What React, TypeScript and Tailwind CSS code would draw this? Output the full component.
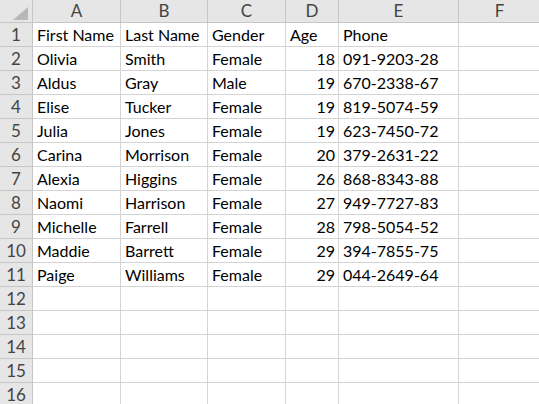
const cols = ["A", "B", "C", "D", "E", "F"];

const rows: (string | number)[][] = [
  ["First Name", "Last Name", "Gender", "Age", "Phone"],
  ["Olivia", "Smith", "Female", 18, "091-9203-28"],
  ["Aldus", "Gray", "Male", 19, "670-2338-67"],
  ["Elise", "Tucker", "Female", 19, "819-5074-59"],
  ["Julia", "Jones", "Female", 19, "623-7450-72"],
  ["Carina", "Morrison", "Female", 20, "379-2631-22"],
  ["Alexia", "Higgins", "Female", 26, "868-8343-88"],
  ["Naomi", "Harrison", "Female", 27, "949-7727-83"],
  ["Michelle", "Farrell", "Female", 28, "798-5054-52"],
  ["Maddie", "Barrett", "Female", 29, "394-7855-75"],
  ["Paige", "Williams", "Female", 29, "044-2649-64"],
  [], [], [], [], [],
];

// F runs just past the window edge, so its right gridline is off screen
const grid = "grid grid-cols-[33px_88px_87px_78px_53px_120px_82px]";

export default function App() {
  return (
    <div className="w-[539px] h-[404px] overflow-hidden bg-white font-['Lato','Liberation_Sans',sans-serif] text-[16px] leading-[20px] text-black">
      {/* column headers */}
      <div className={`${grid} grid-rows-[23px] h-[23px] bg-[#e6e6e6]`}>
        <div className="relative border-r border-b border-[#c6c6c6]">
          <svg className="absolute left-[13px] top-[7px]" width="15" height="13" viewBox="0 0 15 13">
            <polygon points="15,0 15,13 0,13" fill="#b8b8b8" />
          </svg>
        </div>
        {cols.map((c) => (
          <div key={c} className="flex items-center justify-center border-r border-b border-[#c6c6c6] text-[17px] text-[#444]">
            {c}
          </div>
        ))}
      </div>

      {rows.map((r, i) => (
        <div key={i} className={`${grid} grid-rows-[24px] h-[24px]`}>
          <div className="flex items-center justify-center bg-[#e6e6e6] border-r border-b border-[#c6c6c6] text-[17px] text-[#444]">
            {i + 1}
          </div>
          {cols.map((c, j) => {
            const v = r[j];
            return (
              <div
                key={c}
                className={`flex items-end pb-[1px] border-r border-b border-[#d4d4d4] whitespace-nowrap ${
                  typeof v === "number" ? "justify-end pr-[3px]" : "pl-[4px]"
                }`}
              >
                {v}
              </div>
            );
          })}
        </div>
      ))}
    </div>
  );
}
